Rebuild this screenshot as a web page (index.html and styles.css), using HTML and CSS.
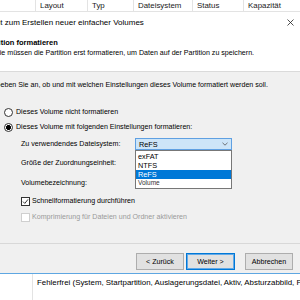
FILE: index.html
```html
<!DOCTYPE html>
<html lang="de">
<head>
    <meta charset="UTF-8">
    <title>Assistent zum Erstellen neuer einfacher Volumes</title>
    <link rel="stylesheet" href="styles.css">
</head>
<body>
    <div class="list-head">
        <div class="col c1"></div>
        <div class="col c2">Layout</div>
        <div class="col c3">Typ</div>
        <div class="col c4">Dateisystem</div>
        <div class="col c5">Status</div>
        <div class="col c6">Kapazität</div>
    </div>

    <div class="wizard">
        <div class="titlebar">
            <span class="title">Assistent zum Erstellen neuer einfacher Volumes</span>
            <svg class="close" width="7" height="7" viewBox="0 0 7 7">
                <path d="M0.5 0.5L6.5 6.5M6.5 0.5L0.5 6.5" stroke="#222" stroke-width="0.8" fill="none"/>
            </svg>
        </div>
        <div class="header">
            <div class="head-title">Partition formatieren</div>
            <div class="head-sub">Sie müssen die Partition erst formatieren, um Daten auf der Partition zu speichern.</div>
        </div>
        <div class="content">
            <p class="intro">Geben Sie an, ob und mit welchen Einstellungen dieses Volume formatiert werden soll.</p>
            <div class="radio r1">Dieses Volume nicht formatieren</div>
            <div class="radio r2 checked">Dieses Volume mit folgenden Einstellungen formatieren:</div>
            <div class="fields">
                <div class="field f1">
                    <span class="flabel">Zu verwendendes Dateisystem:</span>
                    <div class="combo open">
                        <span>ReFS</span>
                        <svg class="chevron" width="6" height="4" viewBox="0 0 6 4">
                            <path d="M0.5 0.8L3 3.2L5.5 0.8" stroke="#555" stroke-width="0.8" fill="none"/>
                        </svg>
                        <div class="droplist">
                            <div class="item">exFAT</div>
                            <div class="item">NTFS</div>
                            <div class="item selected">ReFS</div>
                            <div class="item ghost">Volume</div>
                        </div>
                    </div>
                </div>
                <div class="field f2">
                    <span class="flabel">Größe der Zuordnungseinheit:</span>
                </div>
                <div class="field f3">
                    <span class="flabel">Volumebezeichnung:</span>
                </div>
                <div class="check c-1 checked">Schnellformatierung durchführen</div>
                <div class="check c-2 disabled">Komprimierung für Dateien und Ordner aktivieren</div>
            </div>
        </div>
        <div class="buttons">
            <button class="btn">&lt; Zurück</button>
            <button class="btn default">Weiter &gt;</button>
            <button class="btn cancel">Abbrechen</button>
        </div>
    </div>

    <div class="list-body">
        <div class="cell first"></div>
        <div class="cell">Fehlerfrei (System, Startpartition, Auslagerungsdatei, Aktiv, Absturzabbild, Primäre Partition)</div>
    </div>
</body>
</html>
```

FILE: styles.css
```css
body {
    margin: 0;
    width: 300px;
    height: 300px;
    overflow: hidden;
    background: #fff;
    color: #000;
    font-family: "Liberation Sans", Arial, sans-serif;
    font-size: 7.1px;
}

/* list behind the dialog */
.list-head {
    display: flex;
    height: 11px;
    line-height: 11px;
    border-bottom: 1px solid #e3e3e3;
    white-space: nowrap;
    color: #1a1a1a;
    font-size: 7.9px;
}
.list-head .col {
    box-sizing: border-box;
    padding-left: 4px;
    border-left: 1px solid #e3e3e3;
}
.list-head .c1 { width: 35px; border-left: none; }
.list-head .c2 { width: 52px; }
.list-head .c3 { width: 46px; }
.list-head .c4 { width: 59px; }
.list-head .c5 { width: 51px; }
.list-head .c6 { flex: 1; }

/* wizard dialog */
.wizard {
    margin-left: -40px;
    width: 340px;
    background: #f0f0f0;
    border-bottom: 1px solid #5ea7e2;
}
.titlebar {
    height: 20px;
    background: #fff;
    display: flex;
    align-items: center;
    justify-content: space-between;
    padding: 0 6px 0 10px;
    font-size: 8px;
    white-space: nowrap;
}
.close { display: block; }
.header {
    box-sizing: border-box;
    height: 40px;
    padding-top: 6px;
    background: #fff;
    border-bottom: 1px solid #dadada;
    line-height: 10px;
    white-space: nowrap;
}
.head-title {
    font-weight: bold;
    font-size: 7.5px;
    padding-left: 24px;
}
.head-sub { padding-left: 35px; }

.content {
    height: 171px;
    padding-left: 44px;
    border-bottom: 1px solid #d8d8d8;
}
.intro {
    margin: 0 0 0 -9px;
    padding-top: 8px;
    line-height: 10px;
    white-space: nowrap;
}

.radio, .check {
    display: flex;
    align-items: center;
    height: 10px;
    white-space: nowrap;
}
.radio::before {
    content: "";
    box-sizing: border-box;
    width: 9px;
    height: 9px;
    margin-right: 3px;
    border: 1px solid #333;
    border-radius: 50%;
    background: #fff;
}
.radio.checked::before {
    background: radial-gradient(circle, #000 0, #000 2.2px, #fff 2.6px);
}
.r1 { margin-top: 17px; }
.r2 { margin-top: 5px; }

.fields { padding-left: 17px; }
.field {
    display: flex;
    align-items: center;
    height: 12px;
}
.f1 { margin-top: 6px; }
.f2 { margin-top: 7px; }
.f3 { margin-top: 8px; }
.flabel { width: 114px; }

.combo {
    position: relative;
    box-sizing: border-box;
    width: 97px;
    height: 12px;
    padding-left: 3px;
    display: flex;
    align-items: center;
    justify-content: space-between;
    border: 1px solid #5fa0e2;
    background: #cde5f8;
    font-size: 7.3px;
}
.chevron { margin-right: 3px; }
.droplist {
    position: absolute;
    left: -1px;
    top: 11px;
    box-sizing: border-box;
    width: 97px;
    height: 39px;
    padding-top: 1px;
    border: 1px solid #777;
    background: #fff;
    z-index: 2;
}
.item {
    height: 9px;
    line-height: 9px;
    padding-left: 2px;
}
.item.selected {
    background: #0078d7;
    color: #fff;
}
.item.ghost {
    height: 6px;
    line-height: 7px;
    overflow: hidden;
    font-size: 6.5px;
    color: #333;
}

.check::before {
    content: "";
    box-sizing: border-box;
    width: 9px;
    height: 9px;
    margin-right: 2px;
    border: 1px solid #333;
    background: #fff;
}
.check.checked::before {
    background: #fff url("data:image/svg+xml;utf8,<svg xmlns='http://www.w3.org/2000/svg' width='7' height='7' viewBox='0 0 7 7'><path d='M1 3.6L2.8 5.4L6 1.4' stroke='%23222' stroke-width='0.9' fill='none'/></svg>") no-repeat center;
}
.check.disabled { color: #9a9a9a; }
.check.disabled::before { border-color: #cfcfcf; }
.c-1 { margin-top: 7px; }
.c-2 { margin-top: 6px; }

.buttons {
    height: 29px;
    box-sizing: border-box;
    padding: 9px 7px 0 0;
    display: flex;
    justify-content: flex-end;
    gap: 2px;
}
.btn {
    box-sizing: border-box;
    width: 48px;
    height: 17px;
    padding: 0;
    border: 1px solid #adadad;
    background: #e1e1e1;
    color: #000;
    font-family: inherit;
    font-size: 7.1px;
}
.btn.default {
    width: 49px;
    border-color: #0078d7;
    box-shadow: inset 0 0 0 1px #64a9e6;
}
.btn.cancel { margin-left: 8px; }

/* list rows below the dialog */
.list-body {
    display: flex;
    height: 26px;
    white-space: nowrap;
    font-size: 7.9px;
}
.list-body .cell {
    padding: 4px 0 0 4px;
    line-height: 10px;
}
.list-body .first {
    width: 33px;
    flex: none;
    box-sizing: border-box;
    padding: 0;
    border-right: 1px solid #e3e3e3;
}
```
